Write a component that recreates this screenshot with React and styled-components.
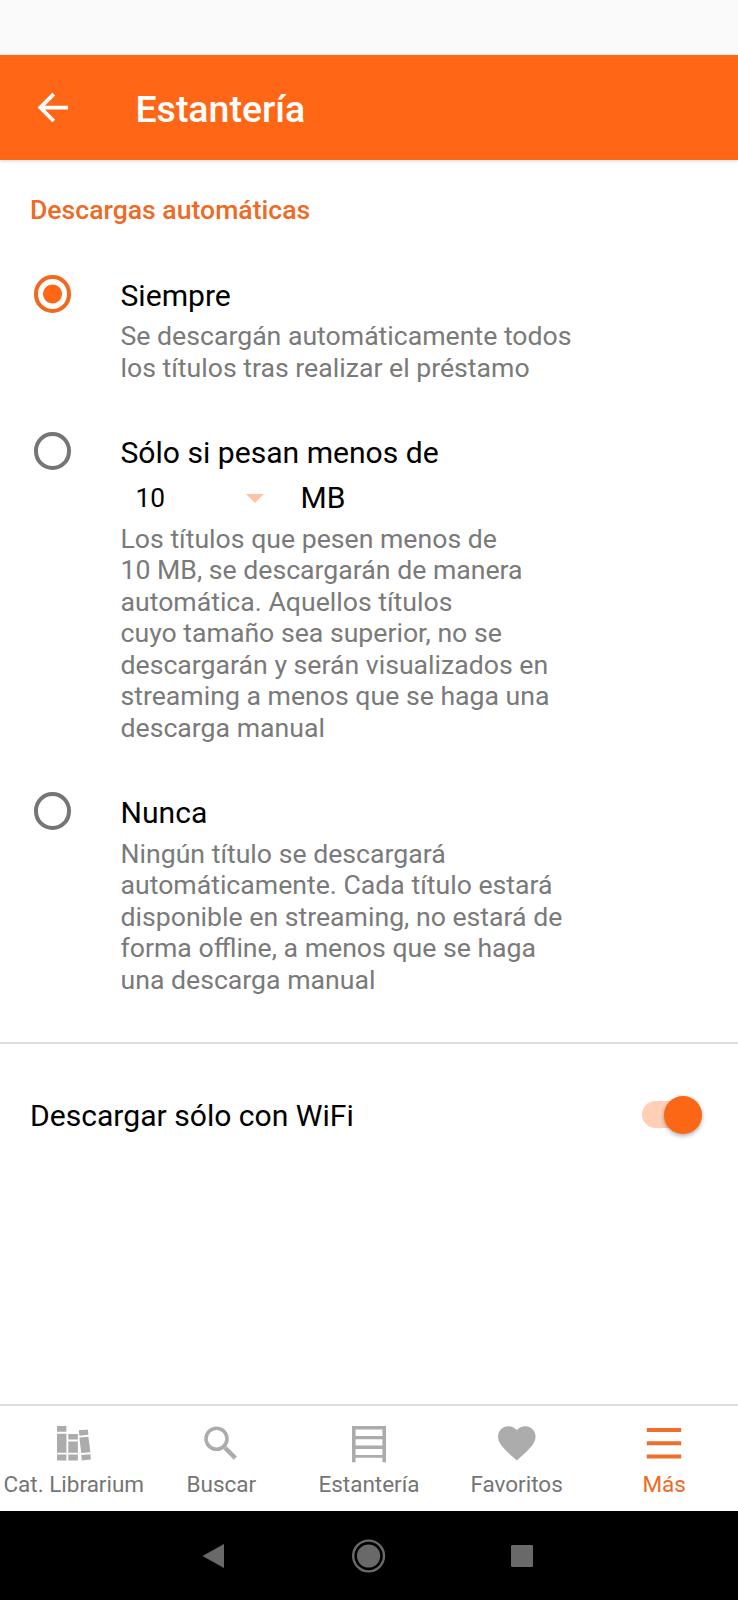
import { useState } from "react";
import styled, { createGlobalStyle } from "styled-components";

const ORANGE = "#ff6717";

const options = [
  {
    id: "always",
    title: "Siempre",
    lines: [
      "Se descargán automáticamente todos",
      "los títulos tras realizar el préstamo",
    ],
  },
  {
    id: "limit",
    title: "Sólo si pesan menos de",
    hasSize: true,
    lines: [
      "Los títulos que pesen menos de",
      "10 MB, se descargarán de manera",
      "automática. Aquellos títulos",
      "cuyo tamaño sea superior, no se",
      "descargarán y serán visualizados en",
      "streaming a menos que se haga una",
      "descarga manual",
    ],
  },
  {
    id: "never",
    title: "Nunca",
    lines: [
      "Ningún título se descargará",
      "automáticamente. Cada título estará",
      "disponible en streaming, no estará de",
      "forma offline, a menos que se haga",
      "una descarga manual",
    ],
  },
];

const BackIcon = () => (
  <svg width="32" height="32" viewBox="0 0 32 32">
    <path d="M31 15.6H4M16.7 2.2L3.3 15.6l13.4 13.4" fill="none" stroke="#fff" strokeWidth="3.8" />
  </svg>
);

const BooksIcon = () => (
  <svg width="40" height="40" viewBox="0 0 40 40" fill="currentColor">
    <path d="M3 2h9.4v5.8H3zM3 9.8h9.4v18.9H3zM3 30.4h9.4v6.1H3z" />
    <path d="M14.3 10h9.6v5.4h-9.6zM14.3 17.4h9.6v11.3h-9.6zM14.3 30.4h9.6v6.1h-9.6z" />
    <path d="M24.8 6.3l9-.8.5 5.3-9 .9zM25.4 13.5l9-.8 2 15.5-9.2.9zM27.3 31.1l9.1-.9.5 5.4-9.1.9z" />
  </svg>
);

const SearchIcon = () => (
  <svg width="40" height="40" viewBox="0 0 40 40" fill="none" stroke="currentColor">
    <circle cx="15.5" cy="14.7" r="10.5" strokeWidth="3.6" />
    <path d="M24 23.7L34.4 34.1" strokeWidth="4.4" />
  </svg>
);

const ShelfIcon = () => (
  <svg width="40" height="40" viewBox="0 0 40 40" fill="currentColor">
    <path d="M3 2h34v36.2h-3.6v-4.4H6.6v4.4H3zM6.6 5.4v6.5h26.8V5.4zM6.6 15.3v6.3h26.8v-6.3zM6.6 25v5.9h26.8V25z" fillRule="evenodd" />
  </svg>
);

const HeartIcon = () => (
  <svg width="46" height="40" viewBox="0 0 46 40" fill="currentColor">
    <path transform="translate(.3 -3.5) scale(1.875)" d="M12 21.35l-1.45-1.32C5.4 15.36 2 12.28 2 8.5 2 5.42 4.42 3 7.5 3c1.74 0 3.41.81 4.5 2.09C13.09 3.81 14.76 3 16.5 3 19.58 3 22 5.42 22 8.5c0 3.78-3.4 6.86-8.55 11.54L12 21.35z" />
  </svg>
);

const MenuIcon = () => (
  <svg width="40" height="40" viewBox="0 0 40 40" fill="currentColor">
    <path d="M2.8 4h34.4v4H2.8zM2.8 17.3h34.4v4H2.8zM2.8 30.4h34.4v4H2.8z" />
  </svg>
);

const tabs = [
  { label: "Cat. Librarium", Icon: BooksIcon },
  { label: "Buscar", Icon: SearchIcon },
  { label: "Estantería", Icon: ShelfIcon },
  { label: "Favoritos", Icon: HeartIcon },
  { label: "Más", Icon: MenuIcon, active: true },
];

const App = () => {
  const [selected, setSelected] = useState("always");
  const [wifiOnly, setWifiOnly] = useState(true);

  return (
    <Screen>
      <GlobalStyle />
      <StatusBar />
      <Header>
        <BackIcon />
        <HeaderTitle>Estantería</HeaderTitle>
      </Header>
      <Settings>
        <SectionTitle>Descargas automáticas</SectionTitle>
        <OptionList>
          {options.map((option) => (
            <Option key={option.id} onClick={() => setSelected(option.id)}>
              <Radio $checked={selected === option.id} />
              <div>
                <OptionTitle>{option.title}</OptionTitle>
                {option.hasSize && (
                  <SizeRow>
                    <SizeSelect>
                      10
                      <Caret />
                    </SizeSelect>
                    <span>MB</span>
                  </SizeRow>
                )}
                <Description $tight={option.hasSize}>
                  {option.lines.map((line) => (
                    <Line key={line}>{line}</Line>
                  ))}
                </Description>
              </div>
            </Option>
          ))}
        </OptionList>
      </Settings>
      <WifiRow>
        <WifiLabel>Descargar sólo con WiFi</WifiLabel>
        <Track $on={wifiOnly} onClick={() => setWifiOnly(!wifiOnly)}>
          <Thumb />
        </Track>
      </WifiRow>
      <TabBar>
        {tabs.map(({ label, Icon, active }) => (
          <Tab key={label} $active={active}>
            <TabIcon $active={active}>
              <Icon />
            </TabIcon>
            {label}
          </Tab>
        ))}
      </TabBar>
      <SystemBar>
        <svg width="40" height="40" viewBox="0 0 40 40">
          <path d="M6.5 20L28 8v24z" fill="#696969" />
        </svg>
        <svg width="40" height="40" viewBox="0 0 40 40">
          <circle cx="19.6" cy="20" r="15.4" fill="none" stroke="#696969" strokeWidth="2.4" />
          <circle cx="19.6" cy="20" r="11.6" fill="#696969" />
        </svg>
        <svg width="40" height="40" viewBox="0 0 40 40">
          <rect x="9" y="9" width="22" height="22" rx="1" fill="#696969" />
        </svg>
      </SystemBar>
    </Screen>
  );
};

const GlobalStyle = createGlobalStyle`
  body {
    margin: 0;
    background: #fff;
    font-family: Roboto, sans-serif;
  }
  * {
    box-sizing: border-box;
  }
`;

const Screen = styled.div`
  display: flex;
  flex-direction: column;
  width: 738px;
  height: 1600px;
  overflow: hidden;
  background: #fff;
`;

const StatusBar = styled.div`
  flex: none;
  height: 55px;
  background: #fafafa;
`;

const Header = styled.header`
  flex: none;
  display: flex;
  align-items: center;
  gap: 66.4px;
  height: 105px;
  padding: 0 0 0 37px;
  background: ${ORANGE};
  box-shadow: 0 1px 4px rgba(0, 0, 0, 0.16);
`;

const HeaderTitle = styled.h1`
  margin: 2px 0 0;
  color: #fff;
  font-size: 37.5px;
  font-weight: 500;
  line-height: 44px;
`;

const Settings = styled.section`
  flex: none;
  height: 884px;
  padding: 34px 30px 0;
  border-bottom: 2px solid #dedede;
`;

const SectionTitle = styled.h2`
  margin: 0;
  color: #ee6a25;
  font-size: 26.6px;
  font-weight: 500;
  line-height: 31px;
`;

const OptionList = styled.div`
  display: flex;
  flex-direction: column;
  gap: 51px;
  margin-top: 53px;
`;

const Option = styled.div`
  display: flex;
  align-items: flex-start;
  gap: 49.5px;
  padding-left: 3.5px;
`;

const Radio = styled.span`
  flex: none;
  width: 37.5px;
  height: 37.5px;
  margin-top: -3px;
  border: 4px solid ${({ $checked }) => ($checked ? "#f1691f" : "#757575")};
  border-radius: 50%;
  background: ${({ $checked }) =>
    $checked ? `radial-gradient(circle, ${ORANGE} 9px, transparent 9.8px)` : "none"};
`;

const OptionTitle = styled.div`
  color: #000;
  font-size: 30.1px;
  line-height: 36px;
`;

const SizeRow = styled.div`
  display: flex;
  align-items: center;
  height: 53px;
  padding-top: 1px;
  font-size: 30px;
  line-height: 36px;
`;

const SizeSelect = styled.div`
  display: flex;
  align-items: center;
  justify-content: space-between;
  width: 180px;
  padding: 0 36.5px 0 15px;
  font-size: 26.25px;
`;

const Caret = styled.span`
  border: 9px solid transparent;
  border-top-color: #fdc3a2;
  border-bottom: 0;
`;

const Description = styled.div`
  margin-top: ${({ $tight }) => ($tight ? "-0.3px" : "7.2px")};
  color: #7a7a7a;
  font-size: 26.65px;
  line-height: 31.5px;
`;

const Line = styled.span`
  display: block;
  white-space: nowrap;
`;

const WifiRow = styled.div`
  flex: none;
  display: flex;
  align-items: center;
  justify-content: space-between;
  height: 143px;
  padding: 0 36.5px 0 30px;
`;

const WifiLabel = styled.span`
  font-size: 30.1px;
  line-height: 36px;
`;

const Track = styled.div`
  display: flex;
  align-items: center;
  justify-content: ${({ $on }) => ($on ? "flex-end" : "flex-start")};
  width: 60px;
  height: 27px;
  margin-bottom: 1.5px;
  border-radius: 14px;
  background: ${({ $on }) => ($on ? "#ffd0b6" : "#b9b9b9")};
`;

const Thumb = styled.span`
  flex: none;
  width: 38px;
  height: 38px;
  border-radius: 50%;
  background: #fc6716;
  box-shadow: 0 2px 4px rgba(0, 0, 0, 0.32);
`;

const TabBar = styled.nav`
  flex: none;
  display: grid;
  grid-template-columns: repeat(5, 1fr);
  height: 107px;
  margin-top: auto;
  padding-top: 18px;
  border-top: 2px solid #dedede;
`;

const Tab = styled.div`
  display: flex;
  flex-direction: column;
  align-items: center;
  color: ${({ $active }) => ($active ? "#ee6a25" : "#757575")};
  font-size: 22.5px;
  line-height: 27px;
  white-space: nowrap;
`;

const TabIcon = styled.span`
  height: 47px;
  color: ${({ $active }) => ($active ? "#ee6e2b" : "#acacac")};
`;

const SystemBar = styled.footer`
  flex: none;
  display: flex;
  align-items: center;
  justify-content: center;
  gap: 113px;
  height: 89px;
  background: #000;
`;

export default App;
